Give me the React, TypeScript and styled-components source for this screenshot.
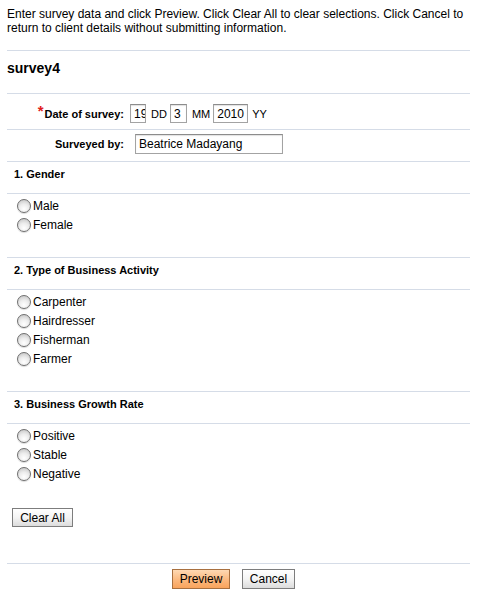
import React from "react";
import styled, { createGlobalStyle } from "styled-components";

const Global = createGlobalStyle`
  html, body { margin: 0; padding: 0; background: #fff; }
  body { font-family: "Liberation Sans", Arial, Helvetica, sans-serif; color: #000; }
  * { box-sizing: border-box; }
`;

const Page = styled.div`
  width: 463px;
  margin-left: 7px;
  display: flex;
  flex-direction: column;
`;

const Intro = styled.p`
  margin: 7px 0 15px;
  font-size: 12px;
  line-height: 14px;
`;

const Rule = styled.div`
  height: 1px;
  background: #d5dce7;
`;

const Title = styled.h1`
  margin: 0;
  padding: 9px 0 17px;
  font-size: 14px;
  line-height: 16px;
  font-weight: bold;
`;

const FieldRow = styled.div<{ $pad: string }>`
  display: grid;
  grid-template-columns: 117px 1fr;
  align-items: center;
  padding: ${(p) => p.$pad};
`;

const FieldLabel = styled.label`
  text-align: right;
  font-size: 11px;
  font-weight: bold;
  line-height: 13px;
`;

const Req = styled.span`
  color: #e0201a;
  font-size: 15px;
  font-weight: bold;
  position: relative;
  top: -2px;
  margin-right: 1px;
`;

const FieldCell = styled.div<{ $inset: number }>`
  display: flex;
  align-items: center;
  padding-left: ${(p) => p.$inset}px;
`;

const TextInput = styled.input<{ $w: number; $h: number }>`
  width: ${(p) => p.$w}px;
  height: ${(p) => p.$h}px;
  margin: 0;
  padding: 0 0 0 3px;
  border: 1px solid #a3a3a3;
  border-top-color: #8c8c8c;
  box-shadow: inset 0 1px 1px rgba(0, 0, 0, 0.12);
  font-family: "Liberation Sans", Arial, Helvetica, sans-serif;
  font-size: 12px;
  color: #000;
  background: #fff;
  outline: none;
`;

const Unit = styled.span<{ $ml: number; $mr: number }>`
  font-size: 11px;
  margin: 0 ${(p) => p.$mr}px 0 ${(p) => p.$ml}px;
`;

const SectionTitle = styled.h2`
  margin: 0;
  padding: 6px 0 12px 7px;
  font-size: 11px;
  line-height: 13px;
  font-weight: bold;
`;

const Options = styled.div`
  display: flex;
  flex-direction: column;
  padding: 2px 0 23px 10px;
`;

const Option = styled.label`
  display: flex;
  align-items: center;
  height: 19px;
  font-size: 12px;
`;

const Radio = styled.input`
  appearance: none;
  -webkit-appearance: none;
  width: 14px;
  height: 14px;
  margin: 0 2px 0 0;
  border-radius: 50%;
  border: 1px solid #6f6f6f;
  background: radial-gradient(circle at 50% 75%, #ffffff 0%, #ececec 45%, #bdbdbd 100%);
  box-shadow: 0 1px 1px rgba(0, 0, 0, 0.15);
`;

const ClearRow = styled.div`
  padding: 2px 0 36px 5px;
  display: flex;
`;

const Button = styled.button<{ $w: number; $h: number; $primary?: boolean }>`
  width: ${(p) => p.$w}px;
  height: ${(p) => p.$h}px;
  margin: 0;
  padding: 0;
  font-family: "Liberation Sans", Arial, Helvetica, sans-serif;
  font-size: 12px;
  color: #000;
  border: 1px solid ${(p) => (p.$primary ? "#a8703f" : "#7d7d7d")};
  background: ${(p) =>
    p.$primary
      ? "linear-gradient(#fed9b3, #fbb67a 60%, #f9a45c)"
      : "linear-gradient(#ffffff, #f4f4f4 50%, #dcdcdc)"};
`;

const Footer = styled.div`
  display: flex;
  justify-content: center;
  gap: 12px;
  padding: 5px 10px 0 0;
`;

type Section = { title: string; options: string[] };

const sections: Section[] = [
  { title: "1. Gender", options: ["Male", "Female"] },
  { title: "2. Type of Business Activity", options: ["Carpenter", "Hairdresser", "Fisherman", "Farmer"] },
  { title: "3. Business Growth Rate", options: ["Positive", "Stable", "Negative"] },
];

export default function App() {
  return (
    <>
      <Global />
      <Page>
        <Intro>
          Enter survey data and click Preview. Click Clear All to clear selections. Click Cancel to
          return to client details without submitting information.
        </Intro>
        <Rule />
        <Title>survey4</Title>
        <Rule />
        <FieldRow $pad="10px 0 6px">
          <FieldLabel>
            <Req>*</Req>Date of survey:
          </FieldLabel>
          <FieldCell $inset={6}>
            <TextInput $w={16} $h={19} defaultValue="19" />
            <Unit $ml={5} $mr={3}>DD</Unit>
            <TextInput $w={17} $h={19} defaultValue="3" />
            <Unit $ml={5} $mr={3}>MM</Unit>
            <TextInput $w={35} $h={19} defaultValue="2010" />
            <Unit $ml={4} $mr={0}>YY</Unit>
          </FieldCell>
        </FieldRow>
        <Rule />
        <FieldRow $pad="4px 0 7px">
          <FieldLabel>Surveyed by:</FieldLabel>
          <FieldCell $inset={11}>
            <TextInput $w={148} $h={20} defaultValue="Beatrice Madayang" />
          </FieldCell>
        </FieldRow>
        {sections.map((s, i) => (
          <React.Fragment key={s.title}>
            <Rule />
            <SectionTitle>{s.title}</SectionTitle>
            <Rule />
            <Options>
              {s.options.map((o) => (
                <Option key={o}>
                  <Radio type="radio" name={`q${i}`} />
                  {o}
                </Option>
              ))}
            </Options>
          </React.Fragment>
        ))}
        <ClearRow>
          <Button $w={61} $h={19}>Clear All</Button>
        </ClearRow>
        <Rule />
        <Footer>
          <Button $w={58} $h={20} $primary>Preview</Button>
          <Button $w={53} $h={20}>Cancel</Button>
        </Footer>
      </Page>
    </>
  );
}
